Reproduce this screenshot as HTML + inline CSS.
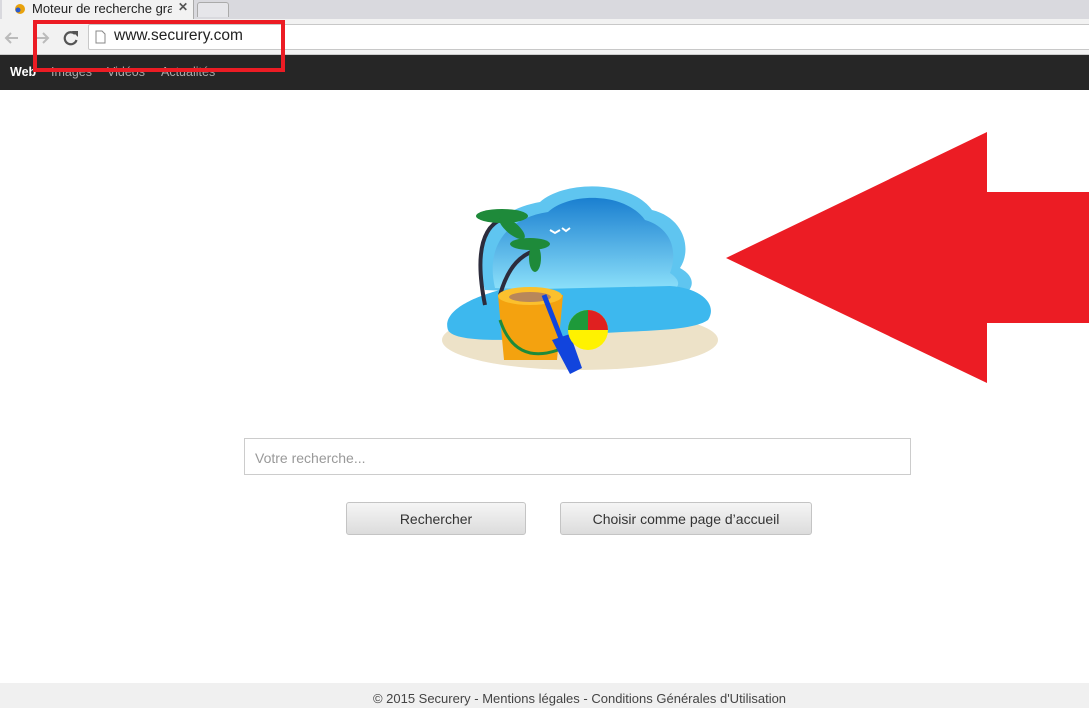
<!DOCTYPE html>
<html><head><meta charset="utf-8"><style>
*{margin:0;padding:0;box-sizing:border-box}
body{width:1089px;height:708px;position:relative;overflow:hidden;background:#fff;font-family:"Liberation Sans",Arial,sans-serif}
.tabbar{position:absolute;left:0;top:0;width:1089px;height:19px;background:#d9d9de}
.tab{position:absolute;left:2px;top:0;width:192px;height:19px;background:#f2f2f2;border-right:1px solid #aaa}
.tab span{position:absolute;left:30px;top:1px;font-size:13px;color:#222;white-space:nowrap;width:140px;overflow:hidden}
.tab b{position:absolute;left:176px;top:0;font-size:12px;color:#555}
.newtab{position:absolute;left:197px;top:2px;width:32px;height:15px;border:1px solid #aaa;border-bottom:none;border-radius:3px 3px 0 0;background:#e6e6ea}
.toolbar{position:absolute;left:0;top:19px;width:1089px;height:36px;background:#f2f2f2;border-bottom:1px solid #ccc}
.omni{position:absolute;left:88px;top:5px;width:1010px;height:26px;background:#fff;border:1px solid #c8c8c8;border-radius:2px}
.omni span{position:absolute;left:25px;top:2px;font-size:15.5px;color:#222}
.nav{position:absolute;left:0;top:55px;width:1089px;height:35px;background:#262626}
.nav a{position:absolute;top:10px;font-size:12.5px;color:#aaa;text-decoration:none}
.redbox{position:absolute;left:33px;top:20px;width:252px;height:52px;border:4px solid #ec1c24}
.search{position:absolute;left:244px;top:438px;width:667px;height:37px;border:1px solid #ccc;background:#fff}
.search span{position:absolute;left:10px;top:11px;font-size:14px;color:#999}
.btn{position:absolute;top:502px;height:33px;border:1px solid #c4c4c4;border-radius:3px;background:linear-gradient(#f5f5f5,#dcdcdc);font-size:14px;color:#333;text-align:center;line-height:33px}
.footer{position:absolute;left:0;top:683px;width:1089px;height:25px;background:#f0f0f0;text-align:center;font-size:13px;color:#444;line-height:31px;padding-left:70px}
</style></head><body>
<div class="tabbar"><div class="tab"><svg style="position:absolute;left:12px;top:3px" width="12" height="12"><circle cx="6" cy="6" r="5" fill="#e8a20c"/><circle cx="4" cy="7" r="2.5" fill="#2a5ad0"/></svg><span>Moteur de recherche gratuit</span><b>✕</b></div><div class="newtab"></div></div>
<div class="toolbar">
<svg style="position:absolute;left:3px;top:10px" width="80" height="18"><path d="M15 9H3M8 4L3 9l5 5" stroke="#bbb" stroke-width="2" fill="none"/><path d="M33 9h12M40 4l5 5-5 5" stroke="#bbb" stroke-width="2" fill="none"/><path d="M72 5a6 6 0 1 0 1.5 6" stroke="#555" stroke-width="2.2" fill="none"/><path d="M69 2h6v6z" fill="#555"/></svg>
<div class="omni"><svg style="position:absolute;left:6px;top:5px" width="11" height="14"><path d="M1 1h6l3 3v9H1z" fill="#fff" stroke="#888"/></svg><span>www.securery.com</span></div></div>
<div class="nav"><a style="left:10px;color:#fff;font-weight:bold">Web</a><a style="left:51px">Images</a><a style="left:107px">Vidéos</a><a style="left:161px">Actualités</a></div>
<div class="redbox"></div>
<svg style="position:absolute;left:440px;top:180px" width="280" height="200">
<defs><linearGradient id="sky" x1="0" y1="0" x2="0" y2="1"><stop offset="0" stop-color="#1a7fd0"/><stop offset="1" stop-color="#8fe3fb"/></linearGradient></defs>
<ellipse cx="140" cy="160" rx="138" ry="30" fill="#ede2c8"/>
<path d="M45 110C30 60 55 30 100 22 125 0 190 0 212 30 245 38 252 70 240 88 262 100 250 118 230 118Z" fill="#5fc5f0"/>
<path d="M55 108C45 65 68 38 108 32 130 12 185 12 205 40 232 48 238 72 230 93 245 103 238 112 220 112Z" fill="url(#sky)"/>
<path d="M8 150C2 132 30 118 60 110L230 106C262 108 278 125 268 140 250 152 200 150 150 154 90 160 15 165 8 150Z" fill="#3db8ee"/>
<path d="M45 125C30 50 55 35 78 38" stroke="#2c2c3c" stroke-width="4" fill="none"/>
<path d="M60 115C70 80 85 75 95 70" stroke="#2c2c3c" stroke-width="4" fill="none"/>
<g fill="#1e8a3a"><ellipse cx="62" cy="36" rx="26" ry="7"/><ellipse cx="72" cy="48" rx="16" ry="6" transform="rotate(40 72 48)"/><ellipse cx="90" cy="64" rx="20" ry="6"/><ellipse cx="95" cy="78" rx="6" ry="14"/></g>
<path d="M58 115h65l-6 65H64z" fill="#f4a20f"/><ellipse cx="90" cy="116" rx="32" ry="9" fill="#fbc02d"/><ellipse cx="90" cy="117" rx="21" ry="5" fill="#b8875a"/>
<path d="M60 140Q75 185 118 170" stroke="#1e8a3a" stroke-width="3" fill="none"/>
<path d="M104 115l18 46" stroke="#1144dd" stroke-width="5"/><path d="M112 160l18-6 12 34-12 6z" fill="#1144dd"/>
<circle cx="148" cy="150" r="20" fill="#fff200"/><path d="M148 130a20 20 0 0 0-20 20l20 0z" fill="#1e9a3a"/><path d="M148 130a20 20 0 0 1 20 20l-20 0z" fill="#e02020"/>
<path d="M110 50l5 3 5-3M122 48l4 3 4-3" stroke="#fff" stroke-width="2" fill="none"/>
</svg>
<svg style="position:absolute;left:0;top:0" width="1089" height="708"><path d="M726 258L987 132V192H1089V323H987V383Z" fill="#ec1c24"/></svg>
<div class="search"><span>Votre recherche...</span></div>
<div class="btn" style="left:346px;width:180px">Rechercher</div>
<div class="btn" style="left:560px;width:252px">Choisir comme page d’accueil</div>
<div class="footer">© 2015 Securery - Mentions légales - Conditions Générales d'Utilisation</div>
</body></html>
